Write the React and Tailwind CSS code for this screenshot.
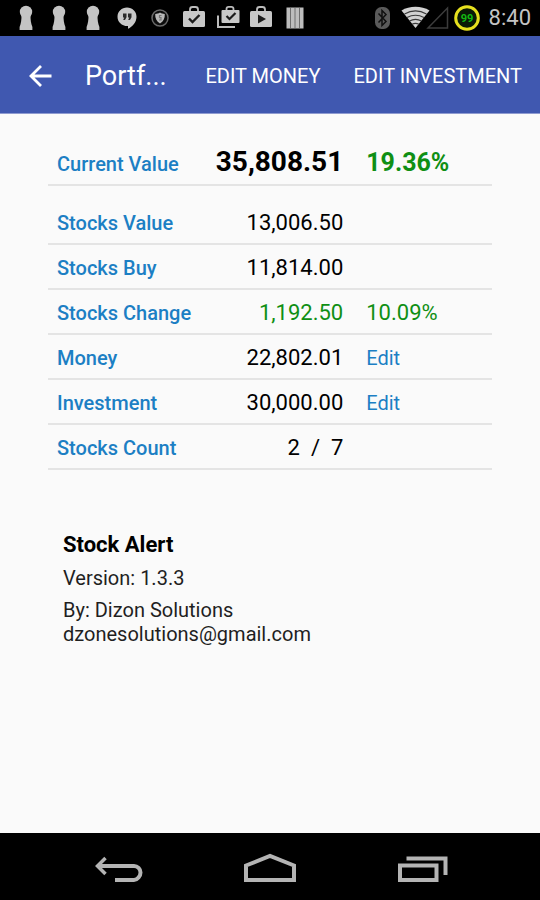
import React from "react";

const statusIcons = [
  "keyhole",
  "keyhole",
  "keyhole",
  "chat",
  "shield",
  "bagCheck",
  "bagStack",
  "bagPlay",
  "bars",
];

function StatusGlyph({ name }) {
  const common = { width: 28, height: 36, viewBox: "0 0 28 36", "aria-hidden": true };
  switch (name) {
    case "keyhole":
      return (
        <svg {...common} fill="#c4c4c4">
          <circle cx="14" cy="12" r="6.200" />
          <path d="M9.500 15h9c0 5 .4 8.500 1.900 12v3H7.600v-3c1.500-3.500 1.900-7 1.900-12z" />
        </svg>
      );
    case "chat":
      return (
        <svg {...common}>
          <path
            fill="#c8c8c8"
            d="M14 7.500c5.300 0 9.500 4 9.500 9.200 0 5.600-4 9.800-8.500 12.100V26c-6 .3-10.500-3.900-10.500-9.300 0-5.200 4.200-9.200 9.500-9.200z"
          />
          <path
            fill="#2b2b2b"
            d="M10 13.500h3.500v3.800L12 20h-1.800l1-2.600H10zM15 13.500h3.500v3.800L17 20h-1.800l1-2.600H15z"
          />
        </svg>
      );
    case "shield":
      return (
        <svg {...common}>
          <circle cx="14" cy="18" r="8" fill="#0c0c0c" stroke="#6a6a6a" strokeWidth="1.500" />
          <path
            fill="#b8b8b8"
            d="M14 12.500c1.500 1 3 1.400 4.800 1.500.2 4-1.300 7.500-4.800 9.500-3.500-2-5-5.500-4.800-9.500 1.800-.1 3.300-.5 4.800-1.500z"
          />
          <path fill="none" stroke="#777" strokeWidth="1.200" d="M15.500 15.500h-2v2.200h1.500v2.300h-2" />
        </svg>
      );
    case "bagCheck":
      return (
        <svg {...common}>
          <path fill="none" stroke="#bcbcbc" strokeWidth="1.800" d="M10 12V9.500C10 8 11 7 12.500 7h3C17 7 18 8 18 9.500V12" />
          <rect x="3" y="11" width="22" height="16" rx="1.500" fill="#c8c8c8" />
          <path fill="none" stroke="#1c1c1c" strokeWidth="2.400" d="M9 18.500l3.500 3.500 7-7" />
        </svg>
      );
    case "bagStack":
      return (
        <svg {...common}>
          <path fill="none" stroke="#bcbcbc" strokeWidth="1.800" d="M12.500 11V9c0-1.300.8-2.200 2.200-2.200h2.600c1.400 0 2.200.9 2.200 2.200v2" />
          <rect x="7.500" y="10" width="18" height="13" rx="1" fill="#c8c8c8" />
          <path fill="none" stroke="#1c1c1c" strokeWidth="2.200" d="M12.500 16l3 3 6-6" />
          <path fill="none" stroke="#bcbcbc" strokeWidth="2" d="M4 15.500V27h17" />
        </svg>
      );
    case "bagPlay":
      return (
        <svg {...common}>
          <path fill="none" stroke="#bcbcbc" strokeWidth="1.800" d="M10 12V9.500C10 8 11 7 12.500 7h3C17 7 18 8 18 9.500V12" />
          <rect x="3" y="11" width="22" height="16" rx="1.500" fill="#c8c8c8" />
          <path fill="#1c1c1c" d="M11 14.500v9l8-4.500z" />
        </svg>
      );
    default:
      return (
        <svg {...common}>
          <rect x="5.500" y="7.500" width="17" height="21" fill="#bdbdbd" />
          <path stroke="#6e6e6e" strokeWidth="1" d="M9.500 8v20M14 8v20M18.500 8v20" />
        </svg>
      );
  }
}

function StatusBar() {
  return (
    <div className="flex h-9 items-center justify-between bg-black px-[9px]">
      <div className="grid w-[303px] grid-cols-9 justify-items-center">
        {statusIcons.map((name, i) => (
          <StatusGlyph key={i} name={name} />
        ))}
      </div>
      <div className="flex items-center">
        <svg width="118" height="36" viewBox="-8 0 118 36" aria-label="99">
          <rect x="-4" y="7" width="15" height="22" rx="6.500" fill="#5a5a5a" />
          <path
            fill="none"
            stroke="#101010"
            strokeWidth="1.500"
            d="M-.5 13.500l7.500 8-4 4V10.500l4 4-7.500 8"
          />
          <path fill="#d2d2d2" d="M36.500 28L22.500 10.500c8-5 20-5 28 0z" />
          <path
            fill="none"
            stroke="#3a3a3a"
            strokeWidth="1.100"
            d="M25.500 14c7-4 15-4 22 0M28 17.500c5.500-3 11.500-3 17 0M30.500 21c4-2.100 8-2.100 12 0M33 24.300c2.300-1.200 4.700-1.200 7 0"
          />
          <path fill="none" stroke="#3c3c3c" strokeWidth="1.500" d="M49 28L68.500 8v20z" />
          <circle cx="88" cy="18" r="11.300" fill="#0a1a06" stroke="#e6e01e" strokeWidth="3" />
          <text
            x="88"
            y="22"
            textAnchor="middle"
            className="fill-[#12b912] font-[Roboto,sans-serif] text-[11px] font-bold"
          >
            99
          </text>
        </svg>
        <span className="text-[22px] leading-9 text-[#c4c4c4]">8:40</span>
      </div>
    </div>
  );
}

function AppBar() {
  return (
    <header className="flex h-[78px] items-center border-b border-[#8f9bd0] bg-[#4058b0] pt-[2px] pr-[18px] pl-7 text-white">
      <button type="button" aria-label="Back" className="shrink-0">
        <svg width="24" height="24" viewBox="0 0 24 24" fill="none" stroke="#fff" strokeWidth="2.800">
          <path d="M23.500 12H3M13 2L3 12l10 10" />
        </svg>
      </button>
      <h1 className="ml-[33px] flex-1 text-[27px] leading-9 whitespace-nowrap">Portf...</h1>
      <nav className="flex shrink-0 gap-[33px] text-xl">
        <button type="button">EDIT MONEY</button>
        <button type="button">EDIT INVESTMENT</button>
      </nav>
    </header>
  );
}

const rows = [
  { label: "Stocks Buy", value: "11,814.00" },
  { label: "Stocks Change", value: "1,192.50", percent: "10.09%" },
  { label: "Money", value: "22,802.01", editable: true },
  { label: "Investment", value: "30,000.00", editable: true },
  { label: "Stocks Count", value: "2  /  7" },
];

function Summary() {
  return (
    <table className="w-full table-fixed border-collapse text-black">
      <colgroup>
        <col className="w-[34%]" />
        <col className="w-[32.5%]" />
        <col className="w-[33.5%]" />
      </colgroup>
      <tbody>
        <tr className="h-12 border-b-2 border-[#e4e4e4] align-baseline">
          <th scope="row" className="pl-[9px] text-left text-xl font-medium text-[#1c7fc4]">
            Current Value
          </th>
          <td className="pt-[7px] text-right text-[28px] leading-9 font-bold">35,808.51</td>
          <td className="pl-[23px] text-[25px] leading-8 font-bold text-[#0f8f14]">19.36%</td>
        </tr>
        <tr className="h-[59px] border-b-2 border-[#e4e4e4]">
          <th scope="row" className="pt-4 pl-[9px] text-left text-xl font-medium text-[#1c7fc4]">
            Stocks Value
          </th>
          <td className="pt-4 text-right text-[22px] leading-7">13,006.50</td>
          <td />
        </tr>
        {rows.map((row) => (
          <tr key={row.label} className="h-[45px] border-b-2 border-[#e4e4e4]">
            <th scope="row" className="pt-[2px] pl-[9px] text-left text-xl font-medium text-[#1c7fc4]">
              {row.label}
            </th>
            <td
              className={
                row.percent
                  ? "pt-[2px] text-right text-[22px] leading-7 text-[#0f8f14]"
                  : "pt-[2px] text-right text-[22px] leading-7 whitespace-pre"
              }
            >
              {row.value}
            </td>
            <td className="pt-[2px] pl-[23px] text-[22px] leading-7 text-[#0f8f14]">
              {row.percent}
              {row.editable && (
                <button
                  type="button"
                  aria-label={"Edit " + row.label}
                  className="block text-xl text-[#1c7fc4]"
                >
                  Edit
                </button>
              )}
            </td>
          </tr>
        ))}
      </tbody>
    </table>
  );
}

function About() {
  return (
    <section className="mt-[59px] pl-[15px] text-xl leading-6 text-[#1f1f1f]">
      <h2 className="text-[22px] leading-8 font-bold text-black">Stock Alert</h2>
      <p className="mt-[5px]">Version: 1.3.3</p>
      <p className="mt-2">By: Dizon Solutions</p>
      <p>dzonesolutions@gmail.com</p>
    </section>
  );
}

function NavBar() {
  return (
    <nav className="flex h-[67px] items-center justify-between bg-black px-[92px]">
      <button type="button" aria-label="Back">
        <svg width="54" height="40" viewBox="0 0 54 40" fill="none" stroke="#b4b4b4" strokeWidth="4">
          <path d="M5 19h37c3.500 0 6.500 3 6.500 6.500S45.500 33 42 33H23" />
          <path d="M13.500 11l-8 8 8 8" strokeWidth="3.500" />
        </svg>
      </button>
      <button type="button" aria-label="Home">
        <svg width="54" height="40" viewBox="0 0 54 40" fill="none" stroke="#b4b4b4" strokeWidth="4">
          <path d="M3 33V18.500L27 9l24 9.500V33z" />
        </svg>
      </button>
      <button type="button" aria-label="Recent apps">
        <svg width="54" height="40" viewBox="0 0 54 40" fill="none" stroke="#b4b4b4" strokeWidth="4">
          <path d="M6 18.500h36.500V33H6zM12.500 11.500h39V28" />
        </svg>
      </button>
    </nav>
  );
}

export default function App() {
  return (
    <div className="flex min-h-screen flex-col bg-[#fafafa] font-[Roboto,sans-serif]">
      <StatusBar />
      <AppBar />
      <main className="flex-1 px-12 pt-[23px]">
        <Summary />
        <About />
      </main>
      <NavBar />
    </div>
  );
}
